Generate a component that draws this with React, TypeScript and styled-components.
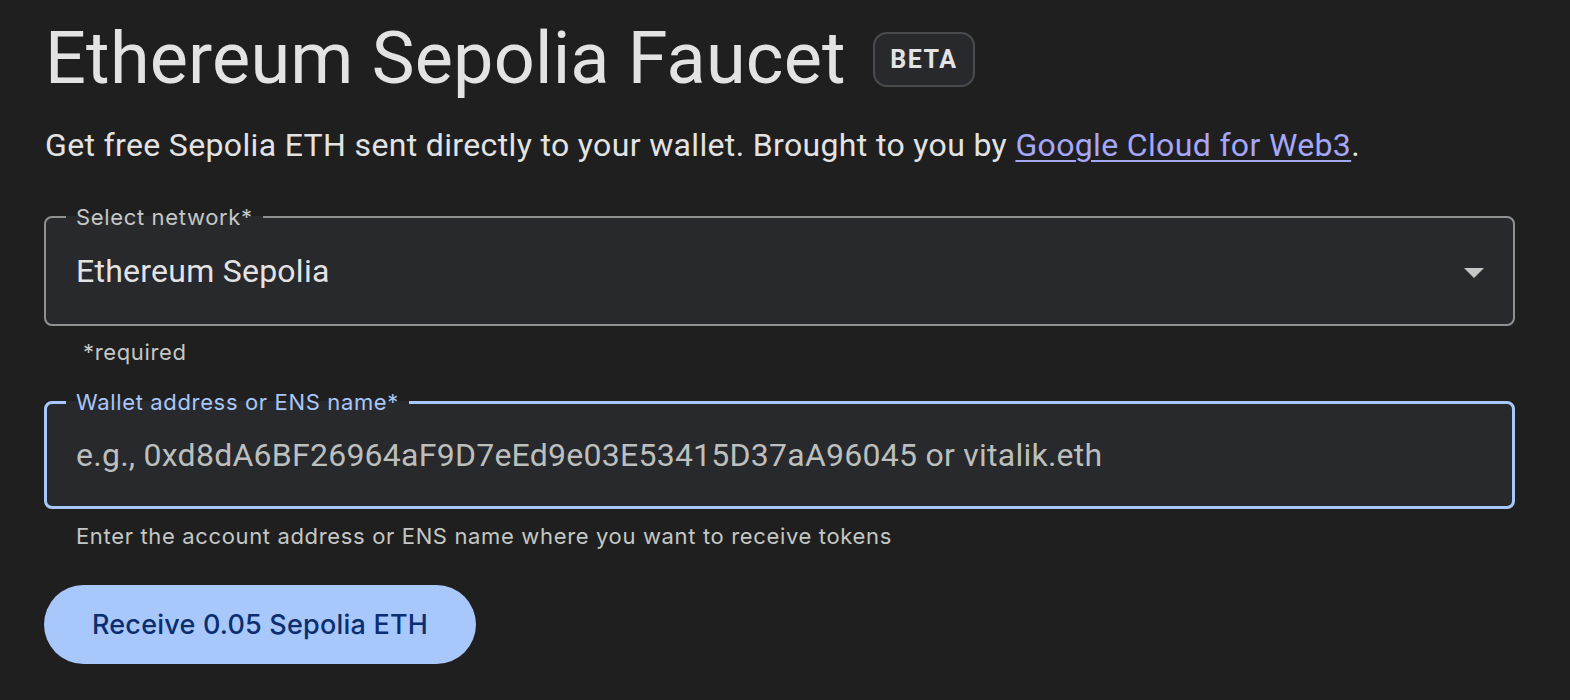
import React from "react";
import styled, { createGlobalStyle } from "styled-components";

const GlobalStyle = createGlobalStyle`
  html, body {
    margin: 0;
    padding: 0;
    background: #1f1f1f;
  }
  body {
    font-family: Roboto, "Open Sans", Arial, sans-serif;
    color: #e3e3e3;
    -webkit-font-smoothing: antialiased;
  }
`;

const smallFont = `Inter, Roboto, Arial, sans-serif`;

const Page = styled.main`
  padding: 23px 0 0 45px;
  width: 1471px;
  box-sizing: content-box;
`;

const TitleRow = styled.div`
  display: flex;
  align-items: center;
  gap: 27px;
`;

const Title = styled.h1`
  margin: 0;
  font-size: 72px;
  line-height: 72px;
  font-weight: 400;
  letter-spacing: 0.2px;
  color: #e3e3e3;
`;

const Badge = styled.span`
  display: inline-flex;
  align-items: center;
  justify-content: center;
  box-sizing: border-box;
  width: 102px;
  height: 55px;
  border: 2px solid #4a4b4e;
  border-radius: 14px;
  background: #28292c;
  color: #e3e3e3;
  font-size: 25px;
  font-weight: 700;
  letter-spacing: 1.5px;
`;

const Subtitle = styled.p`
  margin: 30px 0 0;
  font-size: 32px;
  line-height: 40px;
  letter-spacing: 0.35px;
  color: #e3e3e3;
`;

const Link = styled.a`
  color: #a6a6fa;
  text-decoration: underline;
  text-underline-offset: 4px;
  text-decoration-thickness: 2px;
`;

const Form = styled.form`
  display: flex;
  flex-direction: column;
  align-items: flex-start;
  margin-left: -1px;
  margin-top: 39px;
`;

const Field = styled.fieldset<{ $active?: boolean; $mt?: number }>`
  margin: ${(p) => p.$mt ?? 0}px 0 0;
  box-sizing: border-box;
  width: 1471px;
  min-width: 0;
  padding: 0 29px 0 ${(p) => (p.$active ? 29 : 30)}px;
  border: ${(p) => (p.$active ? "3px solid #a8c7fa" : "2px solid #8e918f")};
  border-radius: 8px;
  background: #28292c;
`;

const Legend = styled.legend<{ $active?: boolean }>`
  margin-left: -10px;
  padding: 0 10px;
  font-family: ${smallFont};
  font-size: 22px;
  line-height: 26px;
  letter-spacing: 0.65px;
  color: ${(p) => (p.$active ? "#a8c7fa" : "#c4c7c5")};
`;

const FieldRow = styled.div<{ $h: number; $pb: number }>`
  display: flex;
  align-items: center;
  justify-content: space-between;
  height: ${(p) => p.$h}px;
  margin-bottom: ${(p) => p.$pb}px;
`;

const Value = styled.span`
  font-size: 32px;
  line-height: 40px;
  letter-spacing: 0.25px;
  color: #e3e3e3;
`;

const ArrowBox = styled.span`
  display: flex;
  margin-top: 4px;
`;

const Input = styled.input`
  flex: 1;
  border: none;
  outline: none;
  background: transparent;
  padding: 0;
  font-family: inherit;
  font-size: 32px;
  line-height: 40px;
  letter-spacing: 0.25px;
  color: #e3e3e3;
  caret-color: #a8c7fa;
  &::placeholder {
    color: #bcbfbd;
  }
`;

const Hint = styled.div<{ $indent: number; $mt: number }>`
  margin-top: ${(p) => p.$mt}px;
  padding-left: ${(p) => p.$indent}px;
  font-family: ${smallFont};
  font-size: 22px;
  line-height: 26px;
  letter-spacing: 0.65px;
  color: #c4c7c5;
`;

const Button = styled.button`
  margin-top: 36px;
  width: 432px;
  height: 79px;
  border: none;
  border-radius: 40px;
  background: #a8c7fa;
  color: #0b2e6e;
  font-family: ${smallFont};
  font-size: 27px;
  font-weight: 500;
  letter-spacing: 0.2px;
  cursor: pointer;
`;

const Arrow = () => (
  <ArrowBox>
    <svg width="20" height="10" viewBox="0 0 20 10">
      <path d="M0 0 L20 0 L10 10 Z" fill="#c4c7c5" />
    </svg>
  </ArrowBox>
);

export default function App() {
  return (
    <>
      <GlobalStyle />
      <Page>
        <TitleRow>
          <Title>Ethereum Sepolia Faucet</Title>
          <Badge>BETA</Badge>
        </TitleRow>
        <Subtitle>
          Get free Sepolia ETH sent directly to your wallet. Brought to you by{" "}
          <Link href="#">Google Cloud for Web3</Link>.
        </Subtitle>
        <Form onSubmit={(e) => e.preventDefault()}>
          <Field>
            <Legend>Select network*</Legend>
            <FieldRow $h={82} $pb={12}>
              <Value>Ethereum Sepolia</Value>
              <Arrow />
            </FieldRow>
          </Field>
          <Hint $indent={39} $mt={13}>*required</Hint>
          <Field $active $mt={24}>
            <Legend $active>Wallet address or ENS name*</Legend>
            <FieldRow $h={79} $pb={12}>
              <Input
                autoFocus
                placeholder="e.g., 0xd8dA6BF26964aF9D7eEd9e03E53415D37aA96045 or vitalik.eth"
              />
            </FieldRow>
          </Field>
          <Hint $indent={32} $mt={14}>
            Enter the account address or ENS name where you want to receive tokens
          </Hint>
          <Button type="submit">Receive 0.05 Sepolia ETH</Button>
        </Form>
      </Page>
    </>
  );
}
